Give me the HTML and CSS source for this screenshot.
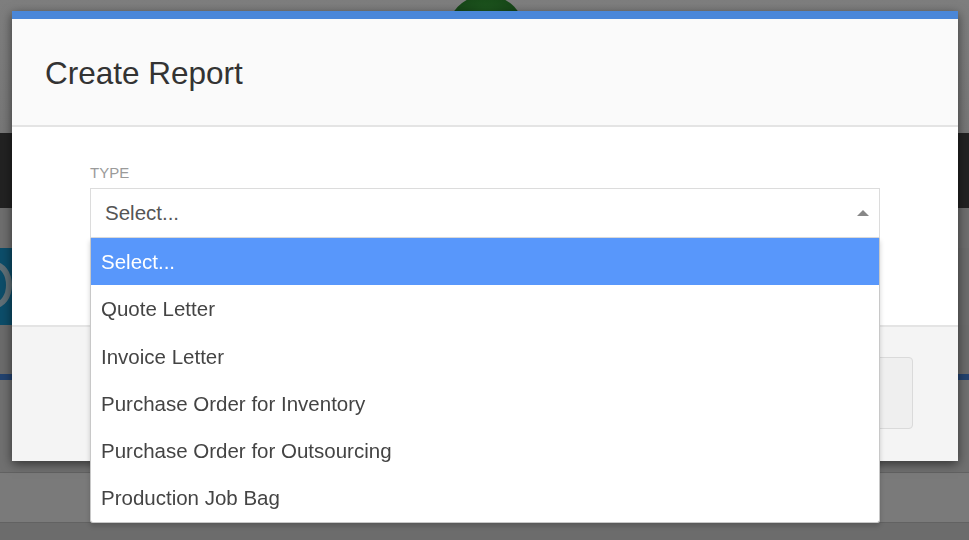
FILE: index.html
```html
<!DOCTYPE html>
<html lang="en">
<head>
<meta charset="utf-8">
<title>Create Report</title>
<link rel="stylesheet" href="styles.css">
</head>
<body>
<div class="page">
  <div class="site-top"><span class="logo-ball"></span></div>
  <div class="site-nav"></div>
  <div class="site-gap"></div>
  <div class="site-banner"><div class="banner-logo"><span class="banner-c"></span></div></div>
  <div class="site-gap2"></div>
  <div class="site-rule"></div>
  <div class="site-content"></div>
  <div class="site-row"></div>
  <div class="site-bottom"></div>
</div>

<div class="modal">
  <div class="modal-header">
    <h4 class="modal-title">Create Report</h4>
  </div>
  <div class="modal-body">
    <label class="field-label">TYPE</label>
    <div class="select">
      <div class="select-box">
        <span class="select-value">Select...</span>
        <svg class="select-arrow" width="12" height="6" viewBox="0 0 12 6"><polygon points="0,6 6,0 12,6" fill="#888"/></svg>
      </div>
      <ul class="select-dropdown">
        <li class="option is-active">Select...</li>
        <li class="option">Quote Letter</li>
        <li class="option">Invoice Letter</li>
        <li class="option">Purchase Order for Inventory</li>
        <li class="option">Purchase Order for Outsourcing</li>
        <li class="option">Production Job Bag</li>
      </ul>
    </div>
  </div>
  <div class="modal-footer">
    <button class="btn" type="button"></button>
  </div>
</div>
</body>
</html>
```

FILE: styles.css
```css
* { box-sizing: border-box; }

html, body {
  margin: 0;
  padding: 0;
  height: 540px;
  overflow: hidden;
}

body {
  background: #6c6c6c;
  font-family: "Liberation Sans", Arial, sans-serif;
}

/* background page seen through the overlay */
.page { display: flex; flex-direction: column; }
.site-top {
  position: relative;
  height: 133px;
  background: linear-gradient(#7e7e7e, #777);
  overflow: hidden;
}
.logo-ball {
  position: absolute;
  left: 446px;
  top: -5px;
  width: 80px;
  height: 80px;
  border-radius: 50%;
  background: radial-gradient(circle at 50% 30%, #1f5a20 0%, #164517 50%, #0f3210 100%);
}
.site-nav { height: 75px; background: #222; }
.site-gap { height: 40px; background: #6e6e6e; }
.site-banner { height: 77px; background: #6c6c6c; display: flex; }
.banner-logo {
  width: 200px;
  background: #0c4d69;
  position: relative;
  overflow: hidden;
}
.banner-c {
  position: absolute;
  left: -22px;
  top: 14px;
  width: 34px;
  height: 46px;
  border: 6px solid #5f6f76;
  border-radius: 50%;
}
.site-gap2 { height: 49px; background: #6b6b6b; }
.site-rule { height: 6px; background: #23436f; }
.site-content { height: 93px; background: #707070; border-bottom: 1px solid #626262; }
.site-row { height: 50px; background: #7a7a7a; border-bottom: 1px solid #626262; }
.site-bottom { flex: 1; height: 20px; background: #6e6e6e; }

/* modal */
.modal {
  position: fixed;
  left: 12px;
  top: 11px;
  width: 946px;
  background: #fff;
  border-top: 8px solid #4a87d9;
  box-shadow: 0 3px 10px rgba(0, 0, 0, 0.55);
}
.modal-header {
  background: #fafafa;
  padding: 37px 33px 35px;
  border-bottom: 2px solid #e4e4e4;
}
.modal-title {
  margin: 0;
  font-size: 31.5px;
  line-height: 34px;
  font-weight: normal;
  color: #333;
}
.modal-body {
  padding: 37px 78px 87px;
  background: #fff;
}
.field-label {
  display: block;
  font-size: 15px;
  line-height: 18px;
  color: #9a9a9a;
  margin-bottom: 6px;
}
.select { position: relative; }
.select-box {
  height: 50px;
  border: 1px solid #dcdcdc;
  display: flex;
  align-items: center;
  justify-content: space-between;
  padding: 0 10px 0 14px;
  background: #fff;
}
.select-value {
  font-size: 20.5px;
  line-height: 48px;
  color: #555;
}
.select-arrow { display: block; margin-top: -1px; }
.select-dropdown {
  position: absolute;
  top: 100%;
  left: 0;
  right: 0;
  margin: 0;
  padding: 0;
  list-style: none;
  background: #fff;
  border: 1px solid #c8c8c8;
  border-top: none;
  border-radius: 0 0 3px 3px;
  box-shadow: 0 3px 5px rgba(0, 0, 0, 0.18);
  z-index: 10;
}
.option {
  height: 47.3px;
  line-height: 47.3px;
  padding-left: 10px;
  font-size: 20.5px;
  color: #444;
  white-space: nowrap;
}
.option.is-active {
  background: #5897fb;
  color: #fff;
}
.modal-footer {
  background: #f4f4f4;
  border-top: 2px solid #e4e4e4;
  padding: 30px 45px 32px;
  display: flex;
  justify-content: flex-end;
}
.btn {
  width: 120px;
  height: 72px;
  background: #efefef;
  border: 1px solid #dadada;
  border-radius: 4px;
  padding: 0;
}
```
